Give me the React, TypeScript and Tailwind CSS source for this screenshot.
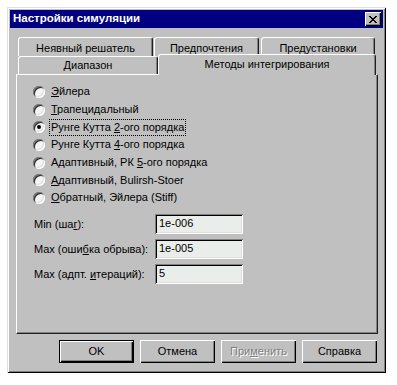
import type { ReactNode } from "react";

const methods: { label: ReactNode; checked?: boolean }[] = [
  { label: <><u>Э</u>йлера</> },
  { label: <><u>Т</u>рапецидальный</> },
  { label: <>Рунге Кутта <u>2</u>-ого порядка</>, checked: true },
  { label: <>Рунге Кутта <u>4</u>-ого порядка</> },
  { label: <>Адаптивный, РК <u>5</u>-ого порядка</> },
  { label: <><u>А</u>даптивный, Bulirsh-Stoer</> },
  { label: <><u>О</u>братный, Эйлера (Stiff)</> },
];

const fields: { label: ReactNode; value: string }[] = [
  { label: <>Min (ша<u>г</u>):</>, value: "1e-006" },
  { label: <>Max (оши<u>б</u>ка обрыва):</>, value: "1e-005" },
  { label: <>Max (адпт. <u>и</u>тераций):</>, value: "5" },
];

function Radio({ checked }: { checked?: boolean }) {
  return (
    <span className="relative flex h-[12px] w-[12px] shrink-0 items-center justify-center rounded-full bg-[#f4f4f4] shadow-[inset_1px_1px_#808080,inset_-1px_-1px_#ffffff,inset_2px_2px_#303030,inset_-2px_-2px_#dfdfdf]">
      {checked ? <span className="h-[4px] w-[4px] rounded-full bg-black" /> : null}
    </span>
  );
}

function Tab({ children, className }: { children: ReactNode; className: string }) {
  return (
    <div
      className={`flex items-center justify-center rounded-t-[3px] border-l border-r border-t border-l-white border-r-[#202020] border-t-white bg-[#c0c0c0] shadow-[inset_-1px_0_#808080] ${className}`}
    >
      {children}
    </div>
  );
}

function Button({ children, primary, disabled }: { children: ReactNode; primary?: boolean; disabled?: boolean }) {
  return (
    <div
      className={`flex h-[23px] w-[75px] items-center justify-center bg-[#c0c0c0] ${
        primary
          ? "border border-black shadow-[inset_1px_1px_#ffffff,inset_-1px_-1px_#000000,inset_-2px_-2px_#808080]"
          : "shadow-[inset_1px_1px_#ffffff,inset_-1px_-1px_#000000,inset_-2px_-2px_#808080]"
      } ${disabled ? "text-[#808080] [text-shadow:1px_1px_#ffffff]" : "text-black"}`}
    >
      {children}
    </div>
  );
}

export default function App() {
  return (
    <div className="min-h-[385px] bg-white p-[7px] font-['Liberation_Sans',Arial,sans-serif] text-[11px] leading-none text-black">
      <div className="flex h-[366px] w-[379px] flex-col bg-[#c0c0c0] p-[3px] shadow-[inset_1px_1px_#dfdfdf,inset_-1px_-1px_#000000,inset_2px_2px_#ffffff,inset_-2px_-2px_#808080]">
        {/* title bar */}
        <div className="flex h-[18px] items-center justify-between bg-[#000080] pl-[3px] pr-[2px]">
          <span className="text-[11.5px] font-bold text-white">Настройки симуляции</span>
          <div className="flex h-[14px] w-[16px] items-center justify-center bg-[#c0c0c0] shadow-[inset_1px_1px_#ffffff,inset_-1px_-1px_#000000,inset_-2px_-2px_#808080]">
            <svg width="8" height="7" viewBox="0 0 8 7" shapeRendering="crispEdges">
              <path d="M0 0h2v1h-2zM6 0h2v1h-2zM1 1h2v1h-2zM5 1h2v1h-2zM2 2h4v1h-4zM3 3h2v1h-2zM2 4h4v1h-4zM1 5h2v1h-2zM5 5h2v1h-2zM0 6h2v1h-2zM6 6h2v1h-2z" fill="#000" />
            </svg>
          </div>
        </div>

        {/* tabs */}
        <div className="ml-[6px] mt-[9px] w-[362px]">
          <div className="flex h-[19px] pl-[2px]">
            <Tab className="w-[135px] pt-[3px]">Неявный решатель</Tab>
            <Tab className="ml-[1px] w-[105px] pt-[3px]">Предпочтения</Tab>
            <Tab className="ml-[2px] w-[114px] pt-[3px]">Предустановки</Tab>
          </div>
          <div className="relative z-10 -mt-[2px] flex h-[20px] items-end pl-[2px]">
            <Tab className="h-[18px] w-[140px]">Диапазон</Tab>
            <Tab className="-mb-[1px] h-[21px] w-[218px] pb-[2px]">Методы интегрирования</Tab>
          </div>

          {/* panel */}
          <div className="flex h-[260px] flex-col border border-l-white border-t-white border-b-[#202020] border-r-[#202020] pl-[16px] pt-[8px] shadow-[inset_-1px_-1px_#808080]">
            <div className="flex flex-col">
              {methods.map((m, i) => (
                <div key={i} className="flex h-[17.7px] items-center gap-[4px]">
                  <Radio checked={m.checked} />
                  <span
                    className={`px-[1px] py-[2px] ${m.checked ? "border border-dotted border-black" : "border border-transparent"}`}
                  >
                    {m.label}
                  </span>
                </div>
              ))}
            </div>
            <div className="mt-[7px] flex flex-col gap-[5px] pl-[1px]">
              {fields.map((f, i) => (
                <div key={i} className="flex h-[20px] items-center">
                  <span className="w-[121px] pt-[1px]">{f.label}</span>
                  <div className="flex h-[20px] w-[88px] items-center bg-[#eaeeea] pl-[4px] shadow-[inset_1px_1px_#808080,inset_-1px_-1px_#ffffff,inset_2px_2px_#000000,inset_-2px_-2px_#dfdfdf]">
                    {f.value}
                  </div>
                </div>
              ))}
            </div>
          </div>
        </div>

        {/* buttons */}
        <div className="mt-[6px] flex justify-end gap-[6px] pr-[6px]">
          <Button primary>OK</Button>
          <Button>Отмена</Button>
          <Button disabled>
            <span>
              При<u>м</u>енить
            </span>
          </Button>
          <Button>Справка</Button>
        </div>
      </div>
    </div>
  );
}
